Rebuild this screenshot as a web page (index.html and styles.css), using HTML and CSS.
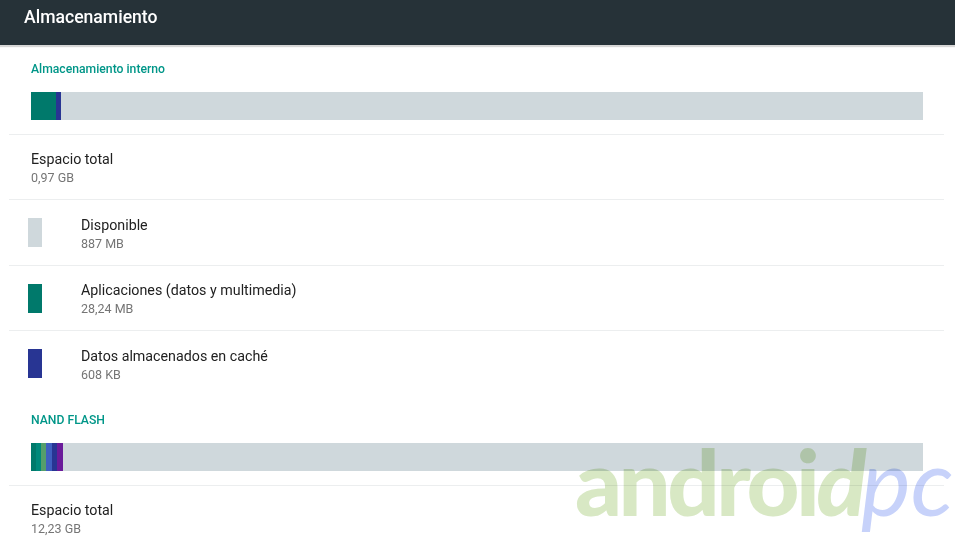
FILE: index.html
```html
<!DOCTYPE html>
<html lang="es">
<head>
  <meta charset="UTF-8" />
  <title>Almacenamiento</title>
  <link rel="stylesheet" href="styles.css">
</head>
<body>

  <header class="app-bar">Almacenamiento</header>

  <main class="content">
    <h2 class="section-title section-first">Almacenamiento interno</h2>
    <div class="bar">
      <span class="seg teal" style="width: 25px"></span>
      <span class="seg indigo" style="width: 5px"></span>
    </div>

    <div class="row">
      <div class="row-title">Espacio total</div>
      <div class="row-sub">0,97 GB</div>
    </div>
    <div class="row with-swatch">
      <span class="swatch grey"></span>
      <div>
        <div class="row-title">Disponible</div>
        <div class="row-sub">887 MB</div>
      </div>
    </div>
    <div class="row with-swatch">
      <span class="swatch teal"></span>
      <div>
        <div class="row-title">Aplicaciones (datos y multimedia)</div>
        <div class="row-sub">28,24 MB</div>
      </div>
    </div>
    <div class="row with-swatch">
      <span class="swatch indigo"></span>
      <div>
        <div class="row-title">Datos almacenados en caché</div>
        <div class="row-sub">608 KB</div>
      </div>
    </div>

    <h2 class="section-title section-second">NAND FLASH</h2>
    <div class="bar">
      <span class="seg dark-teal" style="width: 5px"></span>
      <span class="seg cyan-teal" style="width: 5px"></span>
      <span class="seg green" style="width: 5px"></span>
      <span class="seg blue" style="width: 6px"></span>
      <span class="seg indigo" style="width: 5px"></span>
      <span class="seg purple" style="width: 6px"></span>
    </div>

    <div class="row">
      <div class="row-title">Espacio total</div>
      <div class="row-sub">12,23 GB</div>
    </div>
  </main>

  <div class="watermark"><span class="wm-android">androi<i class="wm-slant">d</i></span><span class="wm-pc">pc</span></div>

</body>
</html>
```

FILE: styles.css
```css
* {
  margin: 0;
  padding: 0;
  box-sizing: border-box;
}

html, body {
  height: 100%;
  overflow: hidden;
}

body {
  position: relative;
  font-family: 'Roboto', sans-serif;
  background: #ffffff;
  color: #212121;
}

.app-bar {
  height: 45px;
  padding: 5px 0 0 24px;
  background: #263238;
  color: #ffffff;
  font-size: 17.6px;
  font-weight: 500;
  line-height: 24px;
  box-shadow: 0 2px 1px rgba(0, 0, 0, 0.16);
}

.content {
  padding: 0 11px 0 9px;
}

.section-title {
  padding-left: 22px;
  color: #009688;
  font-size: 12.2px;
  font-weight: 500;
  line-height: 16px;
}

.section-first {
  margin-top: 16px;
  margin-bottom: 15px;
}

.section-second {
  margin-top: 16.4px;
  margin-bottom: 15px;
}

.bar {
  display: flex;
  width: 892px;
  height: 28px;
  margin-left: 22px;
  margin-bottom: 14px;
  background: #cfd8dc;
}

.seg {
  display: block;
  height: 100%;
}

.row {
  height: 65.4px;
  padding: 14.4px 0 0 22px;
  border-top: 1px solid #eceeef;
}

.with-swatch {
  display: flex;
  align-items: flex-start;
  gap: 39px;
  padding-left: 19px;
}

.swatch {
  flex: none;
  width: 14px;
  height: 29px;
  margin-top: 3.6px;
}

.row-title {
  font-size: 14.25px;
  line-height: 20px;
  color: #212121;
}

.row-sub {
  margin-top: 1px;
  font-size: 12.5px;
  line-height: 16px;
  color: #757575;
}

.grey { background: #cfd8dc; }
.teal { background: #00796b; }
.indigo { background: #283593; }
.dark-teal { background: #00796b; }
.cyan-teal { background: #00897b; }
.green { background: #559e6b; }
.blue { background: #3f5fc0; }
.purple { background: #6a1b9a; }

/* marca de agua por encima de la pagina */
.watermark {
  position: absolute;
  left: 575px;
  top: 425px;
  display: flex;
  align-items: baseline;
  line-height: 110px;
  mix-blend-mode: multiply;
  pointer-events: none;
}

.wm-android {
  font-family: 'Lato', sans-serif;
  font-size: 92px;
  font-weight: 900;
  letter-spacing: -3.5px;
  color: #d8e8c4;
}

.wm-slant {
  font-style: italic;
}

.wm-pc {
  margin-left: -2px;
  font-family: 'Lato', sans-serif;
  font-size: 94px;
  font-weight: 400;
  font-style: italic;
  color: #c7d2fa;
}
```
